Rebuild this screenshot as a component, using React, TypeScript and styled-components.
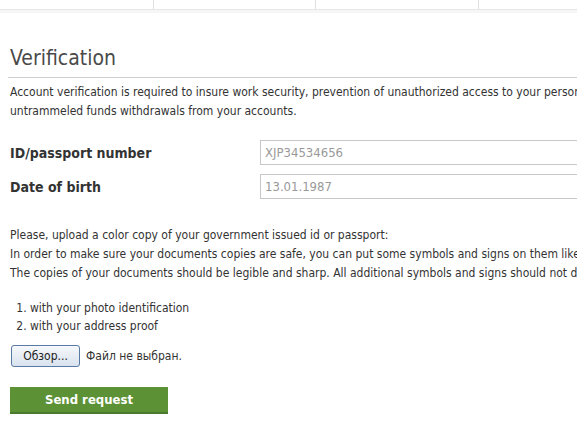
import React from "react";
import styled, { createGlobalStyle } from "styled-components";

const Global = createGlobalStyle`
  html, body { margin: 0; padding: 0; background: #fff; }
  body { font-family: "DejaVu Sans Condensed", "DejaVu Sans", sans-serif; color: #333; overflow: hidden; }
`;

const Page = styled.div`
  width: 577px;
  height: 423px;
  overflow: hidden;
`;

const TopBar = styled.div`
  display: grid;
  grid-template-columns: 153px 162px 163px 1fr;
  height: 9px;
  border-bottom: 1px solid #e6e6e6;
  box-shadow: 0 3px 0 #f6f6f6;
`;

const TopCell = styled.div<{ $sep?: boolean }>`
  border-left: ${(p) => (p.$sep ? "1px solid #e0e0e0" : "none")};
`;

const Content = styled.div`
  padding: 31px 0 0 10px;
  width: 720px;
`;

const Heading = styled.h1`
  margin: 0 0 0 -2px;
  font-weight: normal;
  font-size: 21px;
  line-height: 34px;
  color: #4a4a4a;
  padding: 0 0 2px 2px;
  border-bottom: 1px solid #cfcfcf;
`;

const Para = styled.p<{ $top?: number }>`
  margin: ${(p) => p.$top ?? 0}px 0 0;
  font-size: 12px;
  line-height: 19px;
  color: #333;
  white-space: nowrap;
`;

const Form = styled.div`
  margin-top: 19px;
  display: flex;
  flex-direction: column;
  gap: 9px;
`;

const Row = styled.div`
  display: grid;
  grid-template-columns: 250px 1fr;
  align-items: center;
`;

const Label = styled.label`
  font-size: 14px;
  font-weight: bold;
  color: #333;
`;

const Input = styled.input`
  box-sizing: border-box;
  height: 25px;
  width: 330px;
  border: 1px solid #c8c8c8;
  padding: 0 4px;
  font-family: "DejaVu Sans Condensed", "DejaVu Sans", sans-serif;
  font-size: 13px;
  color: #999;
  outline: none;
`;

const List = styled.ol`
  margin: 16px 0 0;
  padding-left: 20px;
  font-size: 12px;
  line-height: 18px;
  color: #333;
`;

const FileRow = styled.div`
  display: flex;
  align-items: center;
  gap: 6px;
  margin-top: 10px;
  margin-left: 1px;
`;

const FileButton = styled.button`
  box-sizing: border-box;
  height: 22px;
  width: 69px;
  border: 1px solid #5a7aa6;
  border-radius: 3px;
  background: linear-gradient(#f6f8fb, #d8e2ee);
  font-family: "DejaVu Sans Condensed", "DejaVu Sans", sans-serif;
  font-size: 12px;
  color: #222;
  padding: 0;
`;

const FileText = styled.span`
  font-size: 12px;
  color: #333;
`;

const SendButton = styled.button`
  margin-top: 20px;
  box-sizing: border-box;
  width: 158px;
  height: 27px;
  border: none;
  border-bottom: 2px solid #4a7a2c;
  background: #5d9136;
  color: #fff;
  font-family: "DejaVu Sans Condensed", "DejaVu Sans", sans-serif;
  font-weight: bold;
  font-size: 13px;
  padding: 0;
`;

export default function App() {
  return (
    <Page>
      <Global />
      <TopBar>
        <TopCell />
        <TopCell $sep />
        <TopCell $sep />
        <TopCell $sep />
      </TopBar>
      <Content>
        <Heading>Verification</Heading>
        <Para $top={5}>
          Account verification is required to insure work security, prevention of unauthorized access to your personal data and
          <br />
          untrammeled funds withdrawals from your accounts.
        </Para>
        <Form>
          <Row>
            <Label>ID/passport number</Label>
            <Input defaultValue="XJP34534656" />
          </Row>
          <Row>
            <Label>Date of birth</Label>
            <Input defaultValue="13.01.1987" />
          </Row>
        </Form>
        <Para $top={27}>
          Please, upload a color copy of your government issued id or passport:
          <br />
          In order to make sure your documents copies are safe, you can put some symbols and signs on them like
          <br />
          The copies of your documents should be legible and sharp. All additional symbols and signs should not distort
        </Para>
        <List>
          <li>with your photo identification</li>
          <li>with your address proof</li>
        </List>
        <FileRow>
          <FileButton>Обзор...</FileButton>
          <FileText>Файл не выбран.</FileText>
        </FileRow>
        <SendButton>Send request</SendButton>
      </Content>
    </Page>
  );
}
